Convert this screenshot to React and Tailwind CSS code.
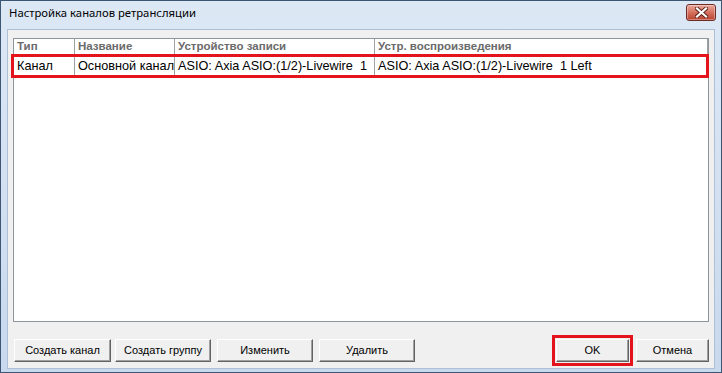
import React from 'react';

const columns = [
  { id: 'type', name: 'Тип', width: 'w-[61px]' },
  { id: 'title', name: 'Название', width: 'w-[100px]' },
  { id: 'rec', name: 'Устройство записи', width: 'w-[200px]' },
  { id: 'play', name: 'Устр. воспроизведения', width: 'flex-1' },
];

const rows = [
  {
    id: 1,
    type: 'Канал',
    title: 'Основной канал',
    rec: 'ASIO: Axia ASIO:(1/2)-Livewire\u00a0\u00a01',
    play: 'ASIO: Axia ASIO:(1/2)-Livewire\u00a0\u00a01 Left',
  },
];

function WinButton({ children, className = '' }) {
  return (
    <button
      className={`h-[23px] bg-[#f0f0f0] border border-t-white border-l-white border-b-[#646464] border-r-[#646464] shadow-[inset_-1px_-1px_#a0a0a0] text-[11px] text-black font-['Liberation_Sans',sans-serif] leading-none ${className}`}
    >
      {children}
    </button>
  );
}

function CloseButton() {
  return (
    <div className="w-[30px] h-[17px] rounded-[3px] border border-[#6e2b25] bg-gradient-to-b from-[#e9a99c] via-[#d5705e] to-[#b9402f] flex items-center justify-center shadow-[inset_0_0_0_1px_rgba(255,255,255,0.35)]">
      <svg width="13" height="11" viewBox="0 0 13 11">
        <path d="M2 1.5 L11 9.5 M11 1.5 L2 9.5" stroke="#5b2019" strokeWidth="4" strokeLinecap="square" />
        <path d="M2 1.5 L11 9.5 M11 1.5 L2 9.5" stroke="#ffffff" strokeWidth="2.2" strokeLinecap="square" />
      </svg>
    </div>
  );
}

export default function App() {
  return (
    <div className="w-[722px] h-[373px] border border-[#3d5674] bg-gradient-to-b from-[#dde8f5] to-[#c8d9ee] flex flex-col font-['Liberation_Sans',sans-serif]">
      {/* Title bar */}
      <div className="h-[28px] flex items-center justify-between pl-[8px] pr-[5px] shrink-0">
        <span className="text-[11.3px] text-black font-['Noto_Sans',sans-serif] -mt-[3px]">Настройка каналов ретрансляции</span>
        <div className="-mt-[5px]">
          <CloseButton />
        </div>
      </div>

      {/* Client area */}
      <div className="flex-1 mx-[6px] mb-[3px] bg-[#f0f0f0] border border-[#aebfd6] flex flex-col pl-[5px] pr-[5px] pt-[8px]">
        <div className="relative h-[284px] bg-white border border-[#8f959d]">
          {/* Header */}
          <div className="flex h-[16px] border-b border-[#a0a0a0]">
            {columns.map((c) => (
              <div
                key={c.id}
                className={`${c.width} border-r border-[#a0a0a0] pl-[3px] text-[11.5px] font-bold text-[#6a6a6a] leading-[15px] whitespace-nowrap overflow-hidden`}
              >
                {c.name}
              </div>
            ))}
          </div>

          {/* Rows */}
          {rows.map((r) => (
            <div key={r.id} className="flex h-[22px]">
              {columns.map((c) => (
                <div
                  key={c.id}
                  className={`${c.width} border-r border-[#a0a0a0] pl-[3px] text-[12.7px] text-black leading-[22px] whitespace-nowrap overflow-hidden`}
                >
                  {r[c.id]}
                </div>
              ))}
            </div>
          ))}

          {/* Annotation around the row */}
          <div className="absolute left-[-3px] right-[-1px] top-[15px] h-[24px] border-[3px] border-[#e3141c] pointer-events-none" />
        </div>

        {/* Buttons */}
        <div className="flex items-center mt-[13px]">
          <WinButton className="w-[97px] ml-[1px]">Создать канал</WinButton>
          <WinButton className="w-[96px] ml-[4px]">Создать группу</WinButton>
          <WinButton className="w-[96px] ml-[6px]">Изменить</WinButton>
          <WinButton className="w-[96px] ml-[6px]">Удалить</WinButton>
          <div className="ml-auto flex items-center">
            <div className="border-[3px] border-[#e3141c] p-[1px]">
              <WinButton className="w-[73px] block">OK</WinButton>
            </div>
            <WinButton className="w-[73px] ml-[3px]">Отмена</WinButton>
          </div>
        </div>
      </div>
    </div>
  );
}
